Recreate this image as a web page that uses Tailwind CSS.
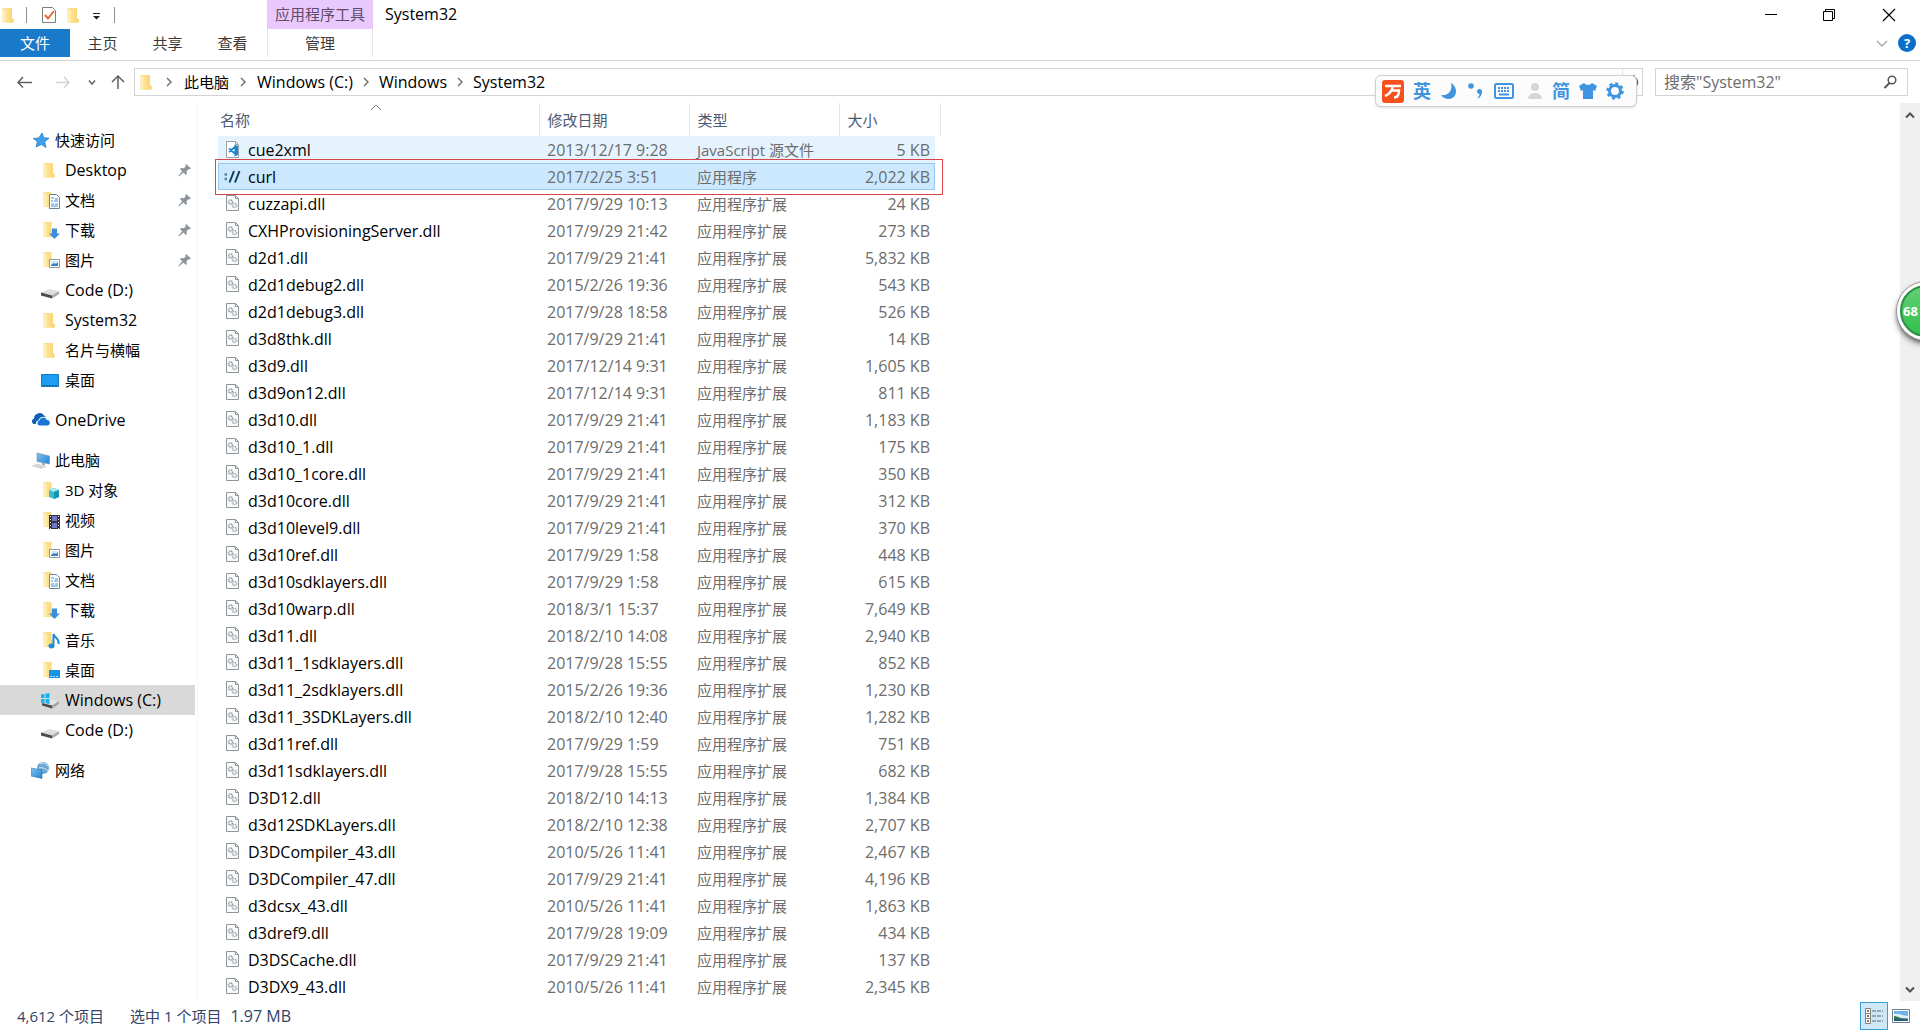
<!DOCTYPE html>
<html lang="zh-CN">
<head>
<meta charset="utf-8">
<meta name="viewport" content="width=device-width, initial-scale=1">
<title>System32</title>
<script src="https://cdn.jsdelivr.net/npm/@tailwindcss/browser@4"></script>
</head>
<body class="relative flex h-screen flex-col overflow-hidden bg-white font-['Open_Sans','Noto_Sans_CJK_SC',sans-serif] text-[15px] leading-5 text-black">

<!-- Shared icons -->
<svg class="absolute size-0">
  <linearGradient id="fold" x1="0" x2="1"><stop offset="0" stop-color="#fde79f"/><stop offset="1" stop-color="#f8d26a"/></linearGradient>
  <linearGradient id="blue" x1="0" y1="0" x2="1" y2="1"><stop offset="0" stop-color="#7cc7f5"/><stop offset="1" stop-color="#2380cf"/></linearGradient>
  <symbol id="i-folder" viewBox="0 0 20 20"><path d="M2.500 3H12v10.500l1.500.5v3.500h-11z" fill="#fbdc88"/><path d="M2.500 3L5 4.500V18l-2.500-1z" fill="#fdeebb"/><path d="M5 4.500L12 3v10.500L13.500 14v3.500H5z" fill="url(#fold)"/></symbol>
  <symbol id="i-half" viewBox="0 0 20 20"><path d="M2.500 2H10v15H2.500z" fill="#fbdc88"/><path d="M2.500 2L5 3.500V17l-2.500-1z" fill="#fdeebb"/><path d="M5 3.500L10.500 2v7l1.500 1v7H5z" fill="url(#fold)"/></symbol>
  <symbol id="i-docs" viewBox="0 0 20 20"><use href="#i-half"/><path d="M8.500 4.500h7l3 3v11h-10z" fill="#fff" stroke="#6d8396"/><path d="M10 8h3M14 9h3M10 11h2M13 11h4M10 14h3M14 14h3M10 16h7" stroke="#3a8fd6"/></symbol>
  <symbol id="i-down" viewBox="0 0 20 20"><use href="#i-half"/><path d="M11 8.500h5v5h3L13.500 19 8 13.500h3z" fill="#3b8ede"/></symbol>
  <symbol id="i-pics" viewBox="0 0 20 20"><use href="#i-half"/><path d="M8.500 9.500h10v8h-10z" fill="#fff" stroke="#8798a6"/><path d="M10 11h7v5h-7z" fill="#d3e9fa"/><path d="M10 16v-1l3-2 2 1 2-2v4z" fill="#3a7fb8"/></symbol>
  <symbol id="i-cube" viewBox="0 0 20 20"><use href="#i-half"/><path d="M8 10l5-2 5 2v7l-5 2-5-2z" fill="#35bcd6"/><path d="M8 10l5 2 5-2-5-2z" fill="#a5ebf5"/><path d="M13 12l5-2v7l-5 2z" fill="#1594ad"/></symbol>
  <symbol id="i-video" viewBox="0 0 20 20"><use href="#i-half"/><path d="M8 5h11v14H8z" fill="#33333f"/><path d="M11 6h5v5h-5zM11 13h5v5h-5z" fill="#7678c4"/><path d="M9.500 6v13M17.500 6v13" stroke="#e8e8e8" stroke-dasharray="1 2"/></symbol>
  <symbol id="i-music" viewBox="0 0 20 20"><use href="#i-half"/><path d="M12.500 4v11M12.500 4c1 4 6 4 5 10" fill="none" stroke="#1c8be0" stroke-width="2"/><ellipse cx="10.500" cy="16" rx="3" ry="2.400" fill="#1c8be0"/></symbol>
  <symbol id="i-deskf" viewBox="0 0 20 20"><use href="#i-half"/><path d="M8 10h11v8H8z" fill="#1593e6"/><path d="M9 16.500h9" stroke="#b7e1fb" stroke-dasharray="2 1"/></symbol>
  <symbol id="i-desk" viewBox="0 0 20 20"><path d="M.5 4.500h17v12H.5z" fill="#1e9df2" stroke="#1179c5"/><path d="M2 15.500h14" stroke="#0c5a96" stroke-dasharray="2 1"/></symbol>
  <symbol id="i-drive" viewBox="0 0 20 20"><path d="M0 12.500l8-3.500 10 2-7 4.500z" fill="#dedede"/><path d="M0 12.500l11 3v3L0 15.500z" fill="#4b4b4b"/><path d="M11 15.500l7-4.500v3l-7 4.500z" fill="#a9a9a9"/></symbol>
  <symbol id="i-win" viewBox="0 0 20 20"><path d="M3 13l6-3.500 9 1.500-7 4.500z" fill="#e4e4e4"/><path d="M1 13l10 2.500v3L1 15.500z" fill="#4b4b4b"/><path d="M11 15.500l7-4.500v3l-7 4.500z" fill="#a5a5a5"/><path d="M0 4.500L3.500 4v4H0zM4.500 3.800L8.500 3v5h-4zM0 9h3.500v4L0 12.500zM4.500 9h4v5l-4-.8z" fill="#12b4f0"/></symbol>
  <symbol id="i-star" viewBox="0 0 20 20"><path d="M11 3l1.800 4.800 5.200.3-4.200 3.700L15 17.500l-4.600-3L5 17l1.400-5.300L2.200 8.400l5.600-.4z" fill="#3f9fe8" stroke="#1a78c6" stroke-width=".7"/></symbol>
  <symbol id="i-cloud" viewBox="0 0 20 20"><path d="M2.500 14A3 3 0 0 1 3 8.500a5.500 5.500 0 0 1 10-3 4 4 0 0 1 2 1.500c-4-1-7 1-7.500 3.500C5 11 4.500 13 5 14z" fill="#0f5fb4"/><path d="M8 15.500a2.700 2.700 0 0 1 .3-5 4 4 0 0 1 7.500-.5 2.800 2.800 0 0 1 .9 5.500z" fill="#1877d2"/></symbol>
  <symbol id="i-pc" viewBox="0 0 20 20"><path d="M6 3l12.500 3v8L6 11.500z" fill="url(#blue)" stroke="#7f98ab" stroke-width=".7"/><path d="M0 16l6-2.500 10 3-6 2.500z" fill="#d4d7da"/><path d="M11 12.500l3 1v2l-3-1z" fill="#9aa4ad"/></symbol>
  <symbol id="i-net" viewBox="0 0 20 20"><circle cx="12" cy="8" r="6" fill="#6ba8d2"/><path d="M9 4c3-2 6 0 8 2M8 8c4-1 7 1 9 3" stroke="#d8eefa" fill="none"/><path d="M0 8l11 2v8.500L0 16z" fill="url(#blue)" stroke="#2878b8" stroke-width=".6"/></symbol>
  <symbol id="i-pin" viewBox="0 0 14 14"><path d="M8 1l5 4.500-1.500.7L10 6.500 8.500 8.500l.4 2.500-1 1L5.500 9.500.8 13.500l-.5-.6L4.200 8.200 2 6l1-1 2.600.3L7.600 3.800 7.400 2z" fill="#8b949b"/></symbol>
  <symbol id="i-dll" viewBox="0 0 16 20"><path d="M1.500 1.500h9l3 3v12h-12z" fill="#fbfbfb" stroke="#8d9699"/><path d="M10.500 1.500v3h3" fill="none" stroke="#8d9699"/><circle cx="5.500" cy="8" r="2" fill="none" stroke="#8e979b" stroke-width="1.600" stroke-dasharray="1.200 .6"/><circle cx="9.500" cy="11.500" r="2" fill="none" stroke="#a0a8ab" stroke-width="1.600" stroke-dasharray="1.200 .6"/></symbol>
  <symbol id="i-js" viewBox="0 0 16 20"><path d="M1.500 1.500h9l3 3v13h-12z" fill="#fff" stroke="#9aa2a8"/><path d="M10.500 1.500v3h3" fill="none" stroke="#9aa2a8"/><path d="M10.500 6v9l1.500-.7V6.700zM10.500 6.500L4 12M10.500 14L4 8.500" fill="none" stroke="#1b86cf" stroke-width="2"/></symbol>
  <symbol id="i-curl" viewBox="0 0 18 20"><path d="M5.500 15.500L10 4M11 15.500L15.500 4" stroke="#123f52" stroke-width="2"/><path d="M.5 7.500h2.500M.5 12h2.500" stroke="#5e8594" stroke-width="2.500"/></symbol>
  <symbol id="i-chev" viewBox="0 0 8 10"><path d="M2 1l4 4-4 4" fill="none" stroke="#6b6b6b" stroke-width="1.400"/></symbol>
</svg>

<!-- Title bar and ribbon tabs -->
<header class="flex shrink-0 justify-between border-b border-[#d4d4d4]">
  <div class="flex">
    <div class="flex w-[267px] flex-col">
      <div class="flex h-[29px] items-center">
        <svg class="size-5"><use href="#i-folder"/></svg>
        <span class="ml-[6px] h-4 w-px bg-[#8f8f8f]"></span>
        <button aria-label="属性" class="ml-[14px]"><svg class="h-5 w-4" viewBox="0 0 16 20"><path d="M1.500 2.500h10l3 3v12h-13z" fill="#fff" stroke="#7d7d7d"/><path d="M4 10l3 3.500L13 6" fill="none" stroke="#e8692e" stroke-width="2"/></svg></button>
        <button aria-label="新建文件夹" class="ml-2"><svg class="size-5"><use href="#i-folder"/></svg></button>
        <button aria-label="自定义快速访问工具栏" class="ml-[5px]"><svg class="h-3 w-3" viewBox="0 0 12 12"><path d="M3 4.500h7" stroke="#222"/><path d="M3 7h7L6.500 10.500z" fill="#222"/></svg></button>
        <span class="ml-3 h-4 w-px bg-[#8f8f8f]"></span>
      </div>
      <nav class="flex h-[31px] items-start">
        <button class="h-7 w-[70px] bg-[#1979ca] text-white">文件</button>
        <button class="h-7 w-[65px] text-[#3a3a3a]">主页</button>
        <button class="h-7 w-[65px] text-[#3a3a3a]">共享</button>
        <button class="h-7 w-[65px] text-[#3a3a3a]">查看</button>
      </nav>
    </div>
    <div class="w-[106px] text-center">
      <div class="h-[29px] bg-[#e9c9fb] pt-1 text-[#5f4a6b]">应用程序工具</div>
      <button class="h-7 w-full border-x border-[#e8e4ea] text-[#3a3a3a]">管理</button>
    </div>
    <h1 class="pt-1 pl-3 text-[16px]">System32</h1>
  </div>
  <div class="flex flex-col items-end">
    <div class="flex h-[29px]">
      <button aria-label="最小化" class="w-[58px]"><svg class="mx-auto size-4" viewBox="0 0 16 16"><path d="M2 7.500h12" stroke="#000"/></svg></button>
      <button aria-label="还原" class="w-[58px]"><svg class="mx-auto size-4" viewBox="0 0 16 16"><path d="M2.500 4.500h9v9h-9zM4.500 4V2.500h9v9H12" fill="none" stroke="#000"/></svg></button>
      <button aria-label="关闭" class="w-[62px]"><svg class="mx-auto size-4" viewBox="0 0 16 16"><path d="M2 2l12 12M14 2L2 14" stroke="#000" stroke-width="1.200"/></svg></button>
    </div>
    <div class="flex h-[31px] items-center gap-2 pr-1 pb-1">
      <button aria-label="展开功能区"><svg class="h-5 w-4" viewBox="0 0 16 20"><path d="M3 8l5 5 5-5" fill="none" stroke="#aaa" stroke-width="1.500"/></svg></button>
      <button aria-label="帮助" class="size-[18px] rounded-full bg-[#0b6fc7] text-[13px] leading-[18px] font-bold text-white">?</button>
    </div>
  </div>
</header>

<!-- Address row -->
<div class="flex shrink-0 items-center py-[7px] pr-[12px] pl-4">
  <button aria-label="后退"><svg class="size-4" viewBox="0 0 16 16"><path d="M7 3L2 8.500l5 5M2 8.500h14" fill="none" stroke="#5f5f5f" stroke-width="1.500"/></svg></button>
  <button aria-label="前进" class="ml-6"><svg class="size-4" viewBox="0 0 16 16"><path d="M8 3l5 5.500-5 5M13 8.500H0" fill="none" stroke="#d3d3d3" stroke-width="1.500"/></svg></button>
  <button aria-label="最近浏览的位置" class="ml-3"><svg class="size-4" viewBox="0 0 16 16"><path d="M5 6.500l3 3.500 3-3.500" fill="none" stroke="#6b6b6b" stroke-width="1.700"/></svg></button>
  <button aria-label="上移" class="ml-[10px]"><svg class="size-4" viewBox="0 0 16 16"><path d="M2 8l6-6 6 6M8 2v13" fill="none" stroke="#5f5f5f" stroke-width="1.500"/></svg></button>
  <nav class="ml-2 flex h-7 min-w-0 flex-1 items-center border border-[#d4d4d4] pl-[3px] text-[16px]">
    <svg class="size-5"><use href="#i-folder"/></svg>
    <svg class="mr-[11px] ml-[7px] h-[10px] w-2"><use href="#i-chev"/></svg>
    <a href="#" class="text-[15px]">此电脑</a>
    <svg class="mx-[10px] h-[10px] w-2"><use href="#i-chev"/></svg>
    <a href="#">Windows (C:)</a>
    <svg class="mx-[9px] h-[10px] w-2"><use href="#i-chev"/></svg>
    <a href="#">Windows</a>
    <svg class="mx-[9px] h-[10px] w-2"><use href="#i-chev"/></svg>
    <a href="#">System32</a>
    <button aria-label="刷新" class="ml-auto h-full w-5 border-l border-[#e2e2e2]"><svg class="mx-auto size-4" viewBox="0 0 16 16"><path d="M9 3.500a5 5 0 1 1-6 3M9 1v5" fill="none" stroke="#6b6b6b" stroke-width="1.400"/></svg></button>
  </nav>
  <label class="ml-[12px] flex h-7 w-[253px] items-center border border-[#d4d4d4] pr-[9px] pl-2 text-[16px]">
    <input type="text" aria-label="搜索" placeholder='搜索"System32"' class="min-w-0 flex-1 outline-none placeholder:text-[#6d6d6d]">
    <svg class="size-4" viewBox="0 0 16 16"><circle cx="10" cy="6" r="3.800" fill="none" stroke="#555" stroke-width="1.500"/><path d="M7.500 9L2.500 14" stroke="#555" stroke-width="2"/></svg>
  </label>
</div>

<!-- Body -->
<div class="flex min-h-0 flex-1">
  <nav id="tree" class="flex w-[198px] shrink-0 flex-col gap-[10px] border-r border-[#f6f6f6] pt-[22px] pr-[2px]"></nav>
  <main class="relative min-w-0 flex-1 overflow-hidden pl-5">
    <table class="w-[722px] table-fixed border-collapse">
      <colgroup><col class="w-[321px]"><col class="w-[150px]"><col class="w-[150px]"><col class="w-[96px]"><col class="w-[5px]"></colgroup>
      <thead>
        <tr class="h-[33px] text-left text-[#4c5a72]">
          <th class="relative border-r border-[#e5e5e5] px-[2px] font-normal">名称<svg class="absolute top-0 left-[152px] h-2 w-3" viewBox="0 0 12 8"><path d="M1 7l5-5 5 5" fill="none" stroke="#777"/></svg></th>
          <th class="border-r border-[#e5e5e5] px-2 font-normal">修改日期</th>
          <th class="border-r border-[#e5e5e5] px-2 font-normal">类型</th>
          <th colspan="2" class="border-r border-[#e5e5e5] px-2 font-normal">大小</th>
        </tr>
      </thead>
      <tbody id="files"></tbody>
    </table>
    <div class="pointer-events-none absolute top-[56px] left-[17px] h-9 w-[728px] border border-[#d9434c]"></div>
  </main>
  <div class="flex w-5 shrink-0 flex-col items-center justify-between bg-[#f0f0f0] py-1">
    <button aria-label="向上滚动"><svg class="size-4" viewBox="0 0 16 16"><path d="M4 10.500l4-4 4 4" fill="none" stroke="#505050" stroke-width="2"/></svg></button>
    <button aria-label="向下滚动"><svg class="size-4" viewBox="0 0 16 16"><path d="M4 6.500l4 4 4-4" fill="none" stroke="#505050" stroke-width="2"/></svg></button>
  </div>
</div>

<!-- Status bar -->
<footer class="flex h-[29px] shrink-0 items-center pl-[17px] text-[#2f4468]">
  <span>4,612 个项目</span>
  <span class="ml-[26px]">选中 1 个项目</span>
  <span class="ml-[9px] text-[16px]">1.97 MB</span>
  <div class="ml-auto flex items-center gap-1 pr-2">
    <button aria-label="详细信息" class="h-7 w-7 border border-[#3c9fd4] bg-[#cde8f8]"><svg class="mx-auto h-[18px] w-5" viewBox="0 0 20 18"><path d="M1.500 1.500h5v5h-5zM1.500 6.500h5v5h-5zM1.500 11.500h5v5h-5z" fill="#fff" stroke="#8a7d73"/><path d="M3 4h2M3 9h2M3 14h2" stroke="#444" stroke-width="1.500"/><path d="M8 4h11M8 9h11M8 14h11" stroke="#666" stroke-dasharray="4 1"/></svg></button>
    <button aria-label="大图标" class="flex size-5 items-center"><svg class="h-4 w-[18px]" viewBox="0 0 18 16"><path d="M.5 1.500h17v13H.5z" fill="#fff" stroke="#6d7f92"/><path d="M2 3h14v10H2z" fill="#6fb1e8"/><path d="M2 6c5-1 8 2 14 2v2H2z" fill="#dff0fb"/><path d="M2 8c4 0 6 3 14 3v2H2z" fill="#38724a"/><path d="M2 11l14 1v1H2z" fill="#245a8c"/></svg></button>
  </div>
</footer>

<!-- Input method toolbar floating over the address row -->
<div class="absolute top-[75px] right-[283px] flex h-8 w-[262px] items-center justify-between rounded-md border border-[#cfcfd4] bg-[#fcfcfd] pr-3 pl-[6px] text-[18px] font-bold text-[#3f94e0] shadow-sm">
  <svg class="h-[23px] w-[22px]" viewBox="0 0 22 23"><rect width="22" height="23" rx="3" fill="#f4511e"/><path d="M3 6h16M9 10.500h8c0 4-1 7-5 7M11 6c-1 5-3 8-8 10" fill="none" stroke="#fff" stroke-width="2.500"/></svg>
  <span>英</span>
  <svg class="size-[18px]" viewBox="0 0 18 18"><path d="M11 1c7 4 7 15-2 16-4 0-7-2-8-4 7 1 12-4 10-12z" fill="#3f94e0"/></svg>
  <svg class="size-[18px]" viewBox="0 0 18 18"><circle cx="4" cy="4" r="2.800" fill="#3f94e0"/><path d="M10 9.500a2.500 2.500 0 0 1 5 0c0 3-1 5-4 7l-.5-1c1.500-1 2-2 2-3.500-1.500 0-2.500-1-2.500-2.500z" fill="#3f94e0"/></svg>
  <svg class="h-4 w-5" viewBox="0 0 20 16"><rect x="1" y="1" width="18" height="14" rx="1.500" fill="none" stroke="#3f94e0" stroke-width="2"/><path d="M4 5h12M4 8h12" stroke="#3f94e0" stroke-width="2" stroke-dasharray="2 1"/><path d="M5 11.500h10" stroke="#3f94e0" stroke-width="2"/></svg>
  <svg class="ml-1 h-[18px] w-4" viewBox="0 0 16 18"><circle cx="8" cy="5" r="4" fill="#d6d6d6"/><path d="M1 17c0-8 14-8 14 0z" fill="#d6d6d6"/></svg>
  <span>简</span>
  <svg class="h-4 w-[18px]" viewBox="0 0 18 16"><path d="M0 3l5-3c2 2.500 6 2.500 8 0l5 3-2 5-2-1v9H4V7L2 8z" fill="#3f94e0"/></svg>
  <svg class="size-[18px]" viewBox="0 0 18 18"><circle cx="9" cy="9" r="5.500" fill="none" stroke="#3f94e0" stroke-width="3"/><circle cx="9" cy="9" r="7.500" fill="none" stroke="#3f94e0" stroke-width="2.500" stroke-dasharray="3 2.890"/></svg>
</div>

<!-- Memory usage ball at the screen edge -->
<div class="absolute top-[281px] -right-9 h-[60px] w-[60px] rounded-full border border-[#9a9a9a] bg-white p-[3px] shadow-md shadow-black/50">
  <div class="flex h-full items-center rounded-full border-2 border-[#2c8f45] bg-linear-to-b from-[#5fd073] to-[#2fc04c] pl-px text-[13px] font-bold text-white">68</div>
</div>

<script>
  const groups = [
    [["star", "快速访问"], ["folder", "Desktop", 1], ["docs", "文档", 1], ["down", "下载", 1], ["pics", "图片", 1], ["drive", "Code (D:)"], ["folder", "System32"], ["folder", "名片与横幅"], ["desk", "桌面"]],
    [["cloud", "OneDrive"]],
    [["pc", "此电脑"], ["cube", "3D 对象"], ["video", "视频"], ["pics", "图片"], ["docs", "文档"], ["down", "下载"], ["music", "音乐"], ["deskf", "桌面"], ["win", "Windows (C:)"], ["drive", "Code (D:)"]],
    [["net", "网络"]]
  ];
  const latin = /^[\x00-\x7f]+$/;
  document.getElementById("tree").innerHTML = groups.map(g => "<div>" + g.map(([icon, name, pin], i) =>
    `<a href="#" class="flex h-[30px] items-center gap-1 pr-[3px] ${i ? "pl-[41px]" : "pl-[31px]"} ${icon === "win" ? "bg-[#d9d9d9]" : ""}"><svg class="size-5 shrink-0"><use href="#i-${icon}"/></svg><span class="${latin.test(name) ? "text-[16px]" : "text-[15px]"}">${name}</span>${pin ? '<svg class="ml-auto size-[14px]"><use href="#i-pin"/></svg>' : ""}</a>`
  ).join("") + "</div>").join("");

  const dll = "应用程序扩展";
  const files = [
    ["cue2xml", "2013/12/17 9:28", "5", "JavaScript 源文件", "js"],
    ["curl", "2017/2/25 3:51", "2,022", "应用程序", "curl"],
    ["cuzzapi.dll", "2017/9/29 10:13", "24"], ["CXHProvisioningServer.dll", "2017/9/29 21:42", "273"],
    ["d2d1.dll", "2017/9/29 21:41", "5,832"], ["d2d1debug2.dll", "2015/2/26 19:36", "543"],
    ["d2d1debug3.dll", "2017/9/28 18:58", "526"], ["d3d8thk.dll", "2017/9/29 21:41", "14"],
    ["d3d9.dll", "2017/12/14 9:31", "1,605"], ["d3d9on12.dll", "2017/12/14 9:31", "811"],
    ["d3d10.dll", "2017/9/29 21:41", "1,183"], ["d3d10_1.dll", "2017/9/29 21:41", "175"],
    ["d3d10_1core.dll", "2017/9/29 21:41", "350"], ["d3d10core.dll", "2017/9/29 21:41", "312"],
    ["d3d10level9.dll", "2017/9/29 21:41", "370"], ["d3d10ref.dll", "2017/9/29 1:58", "448"],
    ["d3d10sdklayers.dll", "2017/9/29 1:58", "615"], ["d3d10warp.dll", "2018/3/1 15:37", "7,649"],
    ["d3d11.dll", "2018/2/10 14:08", "2,940"], ["d3d11_1sdklayers.dll", "2017/9/28 15:55", "852"],
    ["d3d11_2sdklayers.dll", "2015/2/26 19:36", "1,230"], ["d3d11_3SDKLayers.dll", "2018/2/10 12:40", "1,282"],
    ["d3d11ref.dll", "2017/9/29 1:59", "751"], ["d3d11sdklayers.dll", "2017/9/28 15:55", "682"],
    ["D3D12.dll", "2018/2/10 14:13", "1,384"], ["d3d12SDKLayers.dll", "2018/2/10 12:38", "2,707"],
    ["D3DCompiler_43.dll", "2010/5/26 11:41", "2,467"], ["D3DCompiler_47.dll", "2017/9/29 21:41", "4,196"],
    ["d3dcsx_43.dll", "2010/5/26 11:41", "1,863"], ["d3dref9.dll", "2017/9/28 19:09", "434"],
    ["D3DSCache.dll", "2017/9/29 21:41", "137"], ["D3DX9_43.dll", "2010/5/26 11:41", "2,345"]
  ];
  const tint = { js: "bg-[#e5f3ff]", curl: "bg-[#cce8ff] outline outline-[#99c9ee] -outline-offset-1" };
  document.getElementById("files").innerHTML = files.map(([name, date, size, type = dll, icon = "dll"]) =>
    `<tr class="h-[27px] whitespace-nowrap text-[#6d6d6d]">
      <td colspan="4" class="p-0"><div class="grid h-[27px] grid-cols-[321px_150px_150px_96px] items-center text-[16px] ${tint[icon] || ""}">
        <span class="flex items-center gap-[6px] pl-[6px] text-black"><svg class="h-5 w-[18px]"><use href="#i-${icon}"/></svg>${name}</span>
        <span class="pl-2">${date}</span><span class="pl-2 text-[15px]">${type}</span><span class="pr-[5px] text-right">${size} KB</span></div></td><td></td>
    </tr>`).join("");
</script>
</body>
</html>
